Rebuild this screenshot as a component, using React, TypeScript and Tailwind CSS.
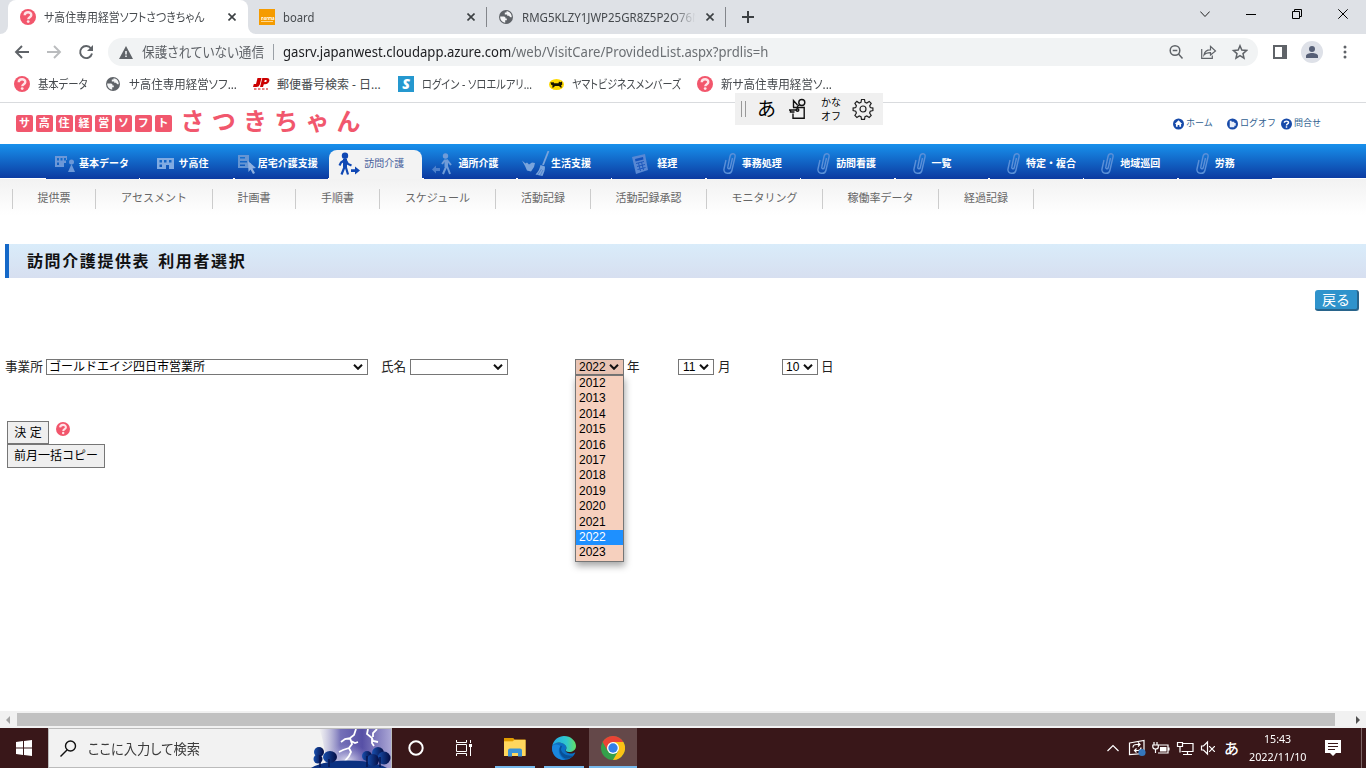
import React, { useLayoutEffect, useRef, useState } from "react";

const ui = "font-['Noto_Sans','Noto_Sans_CJK_JP',sans-serif]";
const page = "font-['Liberation_Sans','Noto_Sans_CJK_JP',sans-serif]";

/* Text condensed or expanded horizontally to a known width. */
function Fit({ w, className = "", children }: { w: number; className?: string; children: React.ReactNode }) {
  const ref = useRef<HTMLSpanElement>(null);
  const [scale, setScale] = useState(1);
  useLayoutEffect(() => {
    if (ref.current) setScale(w / ref.current.offsetWidth);
  }, [w]);
  return (
    <span className={`block shrink-0 whitespace-nowrap ${className}`} style={{ width: w }}>
      <span
        ref={ref}
        className="inline-block origin-left [font-feature-settings:'palt']"
        style={{ transform: `scaleX(${scale})` }}
      >
        {children}
      </span>
    </span>
  );
}

function Question({ size = 16 }: { size?: number }) {
  return (
    <svg width={size} height={size} viewBox="0 0 16 16" className="shrink-0">
      <circle cx="8" cy="8" r="8" fill="#f2566c" />
      <path d="M4.700 6.200c.2-4 6.700-3.800 6.600-.1 0 2.200-3 2-3 4.200" fill="none" stroke="#ffe3e7" strokeWidth="2.400" />
      <circle cx="8.200" cy="12.600" r="1.400" fill="#ffe3e7" />
    </svg>
  );
}

function Globe() {
  return (
    <svg width="14" height="14" viewBox="0 0 14 14" className="shrink-0">
      <circle cx="7" cy="7" r="7" fill="#5f6368" />
      <path d="M1.200 6.600h3.600c1.300 0 1.700.7 1.700 1.800h1.300v1.800H6.200v2.500C3 12.300 1 9.500 1.200 6.600zM7.500 1.300v1.200H5.800v1.900h2.400v1.400h1.600c.8 0 .8 1.400 1.800 1.400h1.100C13 4 10.500 1.400 7.500 1.300z" fill="#f4f5f6" />
    </svg>
  );
}

function Cross({ className = "" }: { className?: string }) {
  return (
    <svg width="8" height="8" viewBox="0 0 8 8" className={`shrink-0 ${className}`}>
      <path d="M.5.5l7 7M7.500.5l-7 7" stroke="#3c4043" strokeWidth="1.600" />
    </svg>
  );
}

function TabStrip() {
  return (
    <div className="flex h-[34px] bg-[#dee1e6] text-[12px] text-[#45494d]">
      <div className="flex w-2 items-end bg-white">
        <div className="h-full w-2 rounded-br-lg bg-[#dee1e6]" />
      </div>
      <div className="flex w-60 items-center rounded-t-lg bg-white pl-3">
        <Question />
        <Fit w={160} className="ml-2 pt-px">サ高住専用経営ソフトさつきちゃん</Fit>
        <Cross className="ml-6" />
      </div>
      <div className="w-2 bg-white">
        <div className="h-full w-2 rounded-bl-lg bg-[#dee1e6]" />
      </div>
      <div className="ml-[3px] flex w-[227px] items-center">
        <div className="flex size-4 flex-col items-center justify-center bg-[#f59b00] pt-1 text-[5px] leading-none font-bold text-white">
          <Fit w={13}>norma</Fit>
          <span className="h-px w-3 bg-[#ffd68c]" />
        </div>
        <Fit w={31} className="ml-2 pt-px">board</Fit>
        <Cross className="ml-[153px]" />
      </div>
      <div className="mt-[7px] h-5 w-px bg-[#83868b]" />
      <div className="flex w-[238px] items-center pl-3">
        <Globe />
        <div className="ml-[9px] w-[179px] pt-px [mask-image:linear-gradient(90deg,#000_84%,transparent_97%)]">
          <Fit w={179}>RMG5KLZY1JWP25GR8Z5P2O76N</Fit>
        </div>
        <Cross className="ml-[5px]" />
      </div>
      <div className="mt-[7px] h-5 w-px bg-[#83868b]" />
      <svg width="12" height="12" viewBox="0 0 12 12" className="mt-[11px] ml-4">
        <path d="M6 0v12M0 6h12" stroke="#3c4043" strokeWidth="2" />
      </svg>
      <div className="mt-2 mr-[18px] ml-auto flex gap-[36px]">
        <svg width="10" height="12" viewBox="0 0 10 12"><path d="M.3 3.500L5 8.500l4.700-5" fill="none" stroke="#222" /></svg>
        <svg width="10" height="12" viewBox="0 0 10 12"><path d="M0 6.500h10" stroke="#000" /></svg>
        <svg width="10" height="12" viewBox="0 0 10 12"><path d="M.5 3.500h7v7h-7zM2.500 3.500v-2h7v7h-2" fill="none" stroke="#000" /></svg>
        <svg width="16" height="12" viewBox="3 0 16 12" className="-mr-1.5"><path d="M3.300 1.300l9.400 9.400M12.700 1.300l-9.400 9.400" stroke="#000" /></svg>
      </div>
    </div>
  );
}

function Toolbar() {
  return (
    <div className="flex h-9 items-center bg-white">
      <svg width="80" height="16" viewBox="0 0 80 16" className="ml-[14px] shrink-0" fill="none" strokeWidth="1.900">
        <path d="M15 8H2M8 2L2 8l6 6" stroke="#5f6368" />
        <path d="M33 8h13M40 2l6 6-6 6" stroke="#babcbe" />
        <path d="M77 4.500A6 6 0 1 0 78 9.500" stroke="#5f6368" />
        <path d="M79 1v6h-6z" fill="#5f6368" />
      </svg>
      <div className="ml-[14px] flex h-7 w-[1150px] items-center rounded-full bg-[#f1f3f4] pl-[11px] text-[14px]">
        <svg width="14" height="13" viewBox="0 0 14 13"><path d="M7 0l7 13H0z" fill="#5f6368" /><path d="M7 5v3.500M7 9.500V11" stroke="#f1f3f4" strokeWidth="1.600" /></svg>
        <Fit w={122} className="ml-[9px] -mt-px text-[#5f6368]">保護されていない通信</Fit>
        <div className="mx-[9px] h-4 w-px bg-[#9aa0a6]" />
        <Fit w={485} className="-mt-px text-[#6b6f73]"><span className="text-[#202124]">gasrv.japanwest.cloudapp.azure.com</span>/web/VisitCare/ProvidedList.aspx?prdlis=h</Fit>
        <svg width="80" height="16" viewBox="0 0 80 16" className="mr-[10px] ml-auto" fill="none" stroke="#5f6368" strokeWidth="1.500">
          <circle cx="7" cy="6.500" r="4.800" /><path d="M10.500 10l4 4.500M4.700 6.500h4.600" />
          <path d="M33.700 5v9.300h10.600V11.500M36 11c.5-4 3-5.200 6.500-5.200V2.300L47.500 7l-5 4V8.600c-3 0-5 .4-6.500 2.400z" strokeWidth="1.200" />
          <path d="M72 1.800l1.800 4.300 4.700.4-3.500 3.100 1 4.500-4-2.400-4 2.400 1-4.500-3.500-3.100 4.700-.4z" />
        </svg>
      </div>
      <svg width="14" height="14" viewBox="0 0 14 14" className="ml-[15px]"><path d="M0 0h14v14H0zM2 2v10h7V2z" fill="#5f6368" fillRule="evenodd" /></svg>
      <svg width="22" height="22" viewBox="0 0 22 22" className="ml-[14px]"><circle cx="11" cy="11" r="11" fill="#dee1e8" /><circle cx="11" cy="8" r="3" fill="#565f76" /><path d="M5 17v-2c0-4 12-4 12 0v2z" fill="#565f76" /></svg>
      <svg width="4" height="14" viewBox="0 0 4 14" className="ml-5"><g fill="#5f6368"><circle cx="2" cy="2" r="1.500" /><circle cx="2" cy="7" r="1.500" /><circle cx="2" cy="12" r="1.500" /></g></svg>
    </div>
  );
}

function Bookmarks() {
  return (
    <div className="flex h-[33px] items-center border-b border-[#d9dbde] bg-white pb-1 pl-[14px] text-[12px] text-[#45494d]">
      <Question />
      <Fit w={50} className="ml-2 pt-px">基本データ</Fit>
      <div className="ml-[18px] flex"><Globe /></div>
      <Fit w={108} className="ml-[9px] pt-px">サ高住専用経営ソフ...</Fit>
      <svg width="17" height="12" viewBox="0 0 17 12" className="ml-4">
        <path d="M4.500 0h4L6.800 6.500Q6 9 3.500 9H0l.8-3h2.200zM9.300 0H14q3 0 2.300 3T12 6.200h-1.200L10 9H7zM11.800 2l-.5 2h1.200q1 0 1.200-1T13 2z" fill="#c00" fillRule="evenodd" />
        <path d="M1 11h14" stroke="#c00" strokeDasharray="2.500 1.500" />
      </svg>
      <Fit w={104} className="ml-[7px] pt-px">郵便番号検索 - 日...</Fit>
      <div className="ml-[17px] flex size-4 items-center justify-center bg-[#2598cf] text-[14px] leading-none font-black text-white italic">S</div>
      <Fit w={110} className="ml-2 pt-px">ログイン - ソロエルアリ...</Fit>
      <svg width="15" height="11" viewBox="0 0 15 11" className="ml-[17px]">
        <ellipse cx="7.500" cy="5.500" rx="7.500" ry="5.500" fill="#ffda00" />
        <path d="M1.500 3l1.500.5 1.500-.5.5 1.300h4.500L10 2.500l1.300.7 1.700-.7.3 3L12 6.500l1 2h-1.500L10 7H6L4.500 8.500H2.800l1-1.800L2 5.500z" fill="#151200" />
      </svg>
      <Fit w={109} className="ml-2 pt-px">ヤマトビジネスメンバーズ</Fit>
      <div className="ml-4"><Question /></div>
      <Fit w={111} className="ml-2 pt-px">新サ高住専用経営ソ...</Fit>
    </div>
  );
}

function ImeBar() {
  return (
    <div className="absolute top-[93px] left-[735px] z-10 flex h-8 w-[148px] items-center bg-[#f0f0f0] pl-[6px] text-black">
      <div className="h-4 w-[5px] border-x border-[#999]" />
      <span className="ml-[11px] w-5 text-[19px] leading-none">あ</span>
      <svg width="19" height="22" viewBox="0 0 19 22" className="ml-[11px]" fill="none" stroke="#111" strokeWidth="1.400">
        <path d="M5 9.500h11.200v10.700H5V15.500M1 12h8.500M2.500 12v2h4M5.500 9.500v-7l4 4.500M9 8.500l3-2" />
        <circle cx="9.500" cy="12" r="1.300" />
        <circle cx="13.800" cy="4.500" r="3" />
      </svg>
      <div className="ml-[14px] flex w-5 flex-col items-center text-[10px] leading-[14px]"><span>かな</span><span>オフ</span></div>
      <svg width="22" height="22" viewBox="0 0 22 22" className="ml-[11px]" fill="none" stroke="#222" strokeWidth="1.200">
        <path d="M9.500 1.500h3l.5 2.800 1.800.7 2.400-1.600 2 2-1.500 2.500.6 1.600 2.600.6v2.400l-2.600.7-.7 1.800 1.600 2.400-2 2-2.400-1.500-1.800.7-.5 2.700h-3l-.5-2.700-1.800-.7-2.300 1.500-2-2L4.400 15l-.7-1.800-2.600-.7v-2.400l2.600-.6.7-1.600L2.900 5.400l2-2L7.200 5l1.800-.7z" />
        <circle cx="11" cy="11" r="3" />
      </svg>
    </div>
  );
}

function HeadLink({ kind, label, className }: { kind: "home" | "out" | "help"; label: string; className: string }) {
  return (
    <a className={`flex items-center gap-0.5 text-[9px] leading-3 text-[#315f91] ${className}`}>
      <svg width="11" height="12" viewBox="0 0 12 12" className="-mb-px">
        <circle cx="6" cy="6" r="6" fill="#174aa9" />
        {kind === "home" && <path d="M6 2L2 6h1.200v3h1.900V7h1.800v2h1.900V6H10z" fill="#fff" />}
        {kind === "out" && <path d="M3 2.500h2v1h3V5h1.500v3H8v1.500H3z" fill="#e8eefb" />}
        {kind === "help" && <path d="M3.700 4.700c.1-2.500 4.700-2.400 4.500 0C8.100 6 6 6 6 7.500M6 8.500V10" stroke="#fff" strokeWidth="1.600" fill="none" />}
      </svg>
      {label}
    </a>
  );
}

function SiteHeader() {
  return (
    <div className="flex h-[41px] items-start bg-white pl-4">
      <div className="mt-[11.500px] flex gap-[2.800px]">
        {"サ高住経営ソフト".split("").map((c, i) => (
          <span key={i} className="flex size-[17px] items-center justify-center rounded-[2px] bg-[#f1576d] text-[11px] leading-none font-bold text-white">{c}</span>
        ))}
      </div>
      <span className="mt-[6px] ml-[9px] text-[24px] leading-[26px] font-bold tracking-[7.200px] text-[#f1576d]">さつきちゃん</span>
      <div className="mt-[14px] ml-auto flex w-[193px]">
        <HeadLink kind="home" label="ホーム" className="w-[54px]" />
        <HeadLink kind="out" label="ログオフ" className="w-[54px]" />
        <HeadLink kind="help" label="問合せ" className="" />
      </div>
    </div>
  );
}

type Kind = "data" | "building" | "home" | "visit" | "day" | "clean" | "calc" | "clip";

function NavIcon({ kind }: { kind: Kind }) {
  const building = <path d="M0 4h17v11h-5v-4H9v4H0zM2.500 6v2.500H5V6zM7 6v2.500h2.500V6zM12 6v2.500h2.500V6zM2.500 10.500V13H5v-2.500z" fillRule="evenodd" />;
  switch (kind) {
    case "data":
      return <svg width="20" height="24" viewBox="0 0 20 24" fill="#6c98d8"><path d="M0 4h12v4h-1v3H9v4H0zM2 6v2.500h2V6zM5.500 6v2.500h2V6zM9 6v2.500h2V6zM2 10.500V13h2v-2.500z" fillRule="evenodd" /><circle cx="16.500" cy="10" r="2.500" /><path d="M16.500 12l3.500 8h-7z" /></svg>;
    case "building":
      return <svg width="17" height="20" viewBox="0 0 17 20" fill="#80abe2">{building}</svg>;
    case "home":
      return <svg width="19" height="24" viewBox="0 0 19 24"><path d="M0 3h11v8h2v5H0zM2 5v1.500h5V5zM2 9v1.500h7V9zM2 12.500V14h5v-1.500z" fill="#6595d3" fillRule="evenodd" /><path d="M10 9l8 7-3.500.5L17 21l-2 1-2.500-4.500L10.500 20z" fill="#8fb0e0" /></svg>;
    case "visit":
      return <svg width="22" height="24" viewBox="0 0 22 24"><circle cx="7" cy="3.800" r="3.200" fill="#1048b4" /><path d="M6 8.500L3 10.500 1.500 13.500M6.500 8v7L3.500 22.500M8 8.500l2 3.500 3.500 1.500M7.500 14l2.500 8.500" fill="none" stroke="#1048b4" strokeWidth="2.200" /><path d="M5 7h4v8.500H5z" fill="#1048b4" /><path d="M13 17.200h4V14.500l5 4-5 4v-2.500h-4z" fill="#1048b4" /></svg>;
    case "day":
      return <svg width="20" height="24" viewBox="0 0 20 24" fill="none" stroke="#709cd8" strokeWidth="2"><circle cx="13.500" cy="4" r="2.700" fill="#709cd8" stroke="none" /><path d="M13 8l-3 4M15 8l4 5M14 8v7l-3 7M15 14l3 8" /><path d="M12.500 7.500h3.500v7.500h-3.500z" fill="#709cd8" stroke="none" /><path d="M8 17H4v-2.500L0 18.500l4 4V20h4z" transform="translate(0 -1)" fill="#4d80cc" stroke="none" /></svg>;
    case "clean":
      return <svg width="28" height="26" viewBox="0 0 28 26" fill="#7aa4dc"><path d="M0 9.500l3.500 3 1.500-1 2 2 3-2 3 .5-1 4-3 4.500-4-1L3 15z" /><path d="M26.500 0L21 14" stroke="#7aa4dc" strokeWidth="1.800" /><path d="M18.500 14l4.500 1.500c0 4-1 6-2.500 9.500l-7-1.500c3-3 4-5.500 5-9.500z" /><path d="M15.500 24l4-6M18 25l3-6" stroke="#3d74c8" strokeWidth=".7" /></svg>;
    case "calc":
      return <svg width="18" height="22" viewBox="0 0 18 22"><path d="M1 4l13-3 3 16-12 4z" fill="#5888d4" /><path d="M4 6l8-2 .5 2.500-8 2z" fill="#1252bd" /><path d="M5 10.500l8-2M6 13.500l8-2M6.500 16.500l8-2M7.500 10l2 8M10.500 9l2 8" stroke="#1c58bc" /></svg>;
    default:
      return <svg width="13" height="23" viewBox="0 0 13 23" fill="none" stroke="#5b90d8" strokeWidth="1.400"><path d="M9.500 6L7.300 15.500C6.800 17.500 4.300 17 4.800 15L7 4.500C8 .5 13 1 12 5L9 18c-1 5-9 4-8-1L3 8" /></svg>;
  }
}

const tabs: { label: string; kind: Kind; box: string; active?: boolean }[] = [
  { label: "基本データ", kind: "data", box: "pl-[9px] gap-1" },
  { label: "サ高住", kind: "building", box: "pl-[17px] gap-1" },
  { label: "居宅介護支援", kind: "home", box: "pl-[3px] gap-px" },
  { label: "訪問介護", kind: "visit", box: "pl-[9px] gap-1", active: true },
  { label: "通所介護", kind: "day", box: "pl-2 gap-[7px]" },
  { label: "生活支援", kind: "clean", box: "pl-1 gap-px" },
  { label: "経理", kind: "calc", box: "pl-[19px] gap-2" },
  { label: "事務処理", kind: "clip", box: "pl-4 gap-1.5" },
  { label: "訪問看護", kind: "clip", box: "pl-4 gap-1.5" },
  { label: "一覧", kind: "clip", box: "pl-[17px] gap-1.5" },
  { label: "特定・複合", kind: "clip", box: "pl-[17px] gap-1.5" },
  { label: "地域巡回", kind: "clip", box: "pl-[17px] gap-1.5" },
  { label: "労務", kind: "clip", box: "pl-[17px] gap-1.5" },
];

const sub = [
  ["提供票", "w-[83px]"], ["アセスメント", "w-[117px]"], ["計画書", "w-[83px]"], ["手順書", "w-[84px]"],
  ["スケジュール", "w-[116px]"], ["活動記録", "w-[95px]"], ["活動記録承認", "w-[116px]"],
  ["モニタリング", "w-[116px]"], ["稼働率データ", "w-[116px]"], ["経過記録", "w-[95px]"],
];

function Nav() {
  return (
    <>
      <nav className="flex h-[35px] bg-[linear-gradient(#1891ec,#0c3ca2_34px,#fff_34px)] pl-[46px]">
        {tabs.map((t) => (
          <div key={t.label} className={`w-[94.400px] shrink-0 ${t.active ? "pt-1.5" : "pr-[1.500px]"}`}>
            <div
              className={`flex items-center text-[10px] leading-none whitespace-nowrap ${t.box} ${
                t.active
                  ? "h-[29px] w-[93px] rounded-t-lg bg-[#f3f3f3] pb-0.5 text-[#48619b]"
                  : "h-[35px] bg-[linear-gradient(#1891ec,#0c3ca2_34px)] pt-1 font-bold text-white"
              }`}
            >
              <NavIcon kind={t.kind} />
              {t.label}
            </div>
          </div>
        ))}
      </nav>
      <div className="flex h-9 bg-linear-to-b from-[#f2f2f2] to-white pt-2.5 pl-3 text-[11px] leading-[19px] text-[#666]">
        {sub.map(([label, w]) => (
          <div key={label} className={`h-5 border-l border-[#ccc] text-center ${w}`}>{label}</div>
        ))}
        <div className="h-5 w-px bg-[#ccc]" />
      </div>
    </>
  );
}

function Select({ value, className = "" }: { value: string; className?: string }) {
  return (
    <div className={`flex h-4 items-center justify-between border border-[#767676] pr-1 text-[12px] leading-none whitespace-nowrap text-black ${className}`}>
      <span>{value}</span>
      <svg width="10" height="6" viewBox="0 0 10 6" className="shrink-0"><path d="M1 .8l4 4 4-4" fill="none" stroke="#111" strokeWidth="2" /></svg>
    </div>
  );
}

const years = [2012, 2013, 2014, 2015, 2016, 2017, 2018, 2019, 2020, 2021, 2022, 2023];

function Content() {
  return (
    <main className="flex h-[496px] flex-col pt-[29px] text-[#222]">
      <h1 className="ml-[5px] h-[34px] border-l-4 border-[#1468c8] bg-linear-to-b from-[#d9ecfa] to-[#d7dff0] pl-[18px] text-[16px] leading-[36px] font-bold tracking-[1.600px] [word-spacing:2px] text-[#111]">訪問介護提供表 利用者選択</h1>
      <button className="mt-3 mr-[7px] h-[21px] w-[44px] self-end rounded-[3px] border-r-2 border-b-2 border-[#28648b] bg-[#2f93cc] text-[14px] leading-[18px] text-white">戻る</button>
      <div className="mt-[48px] flex h-4 items-center pl-[5px] text-[12.600px] leading-none whitespace-nowrap">
        <span className="w-[41px]">事業所</span>
        <Select value="ゴールドエイジ四日市営業所" className="w-[322px] pl-0.5" />
        <span className="ml-[13px] w-[29px]">氏名</span>
        <Select value="" className="w-[98px]" />
        <div className="relative ml-[67px]">
          <Select value="2022" className="w-[49px] bg-[#e9c4b4] pl-[3px]" />
          <ul className="absolute top-4 left-0 h-[187px] w-[49px] border border-[#767676] bg-[#f6d0be] text-[12px] leading-[15.400px] text-black shadow-[1px_4px_7px_rgba(0,0,0,0.35)]">
            {years.map((y) => (
              <li key={y} className={`pl-[3px] ${y === 2022 ? "bg-[#1e90ff] text-white" : ""}`}>{y}</li>
            ))}
          </ul>
        </div>
        <span className="ml-[3px] w-[51px]">年</span>
        <Select value="11" className="w-9 pl-1" />
        <span className="ml-1 w-[64px]">月</span>
        <Select value="10" className="w-9 pl-[3px]" />
        <span className="ml-[3px]">日</span>
      </div>
      <div className="mt-[46px] flex pl-[7px]">
        <button className="h-[23px] w-[42px] border border-[#767676] bg-[#efefef] text-[12px] leading-none text-black">決 定</button>
        <div className="mt-px ml-[7px]"><Question size={14} /></div>
      </div>
      <button className="ml-[7px] h-6 w-[98px] border border-[#767676] bg-[#efefef] text-[12px] leading-none whitespace-nowrap text-black">前月一括コピー</button>
    </main>
  );
}

function ScrollBar() {
  return (
    <div className="flex h-[17px] items-center justify-between bg-[#f1f1f1] px-1.5">
      <svg width="4" height="8" viewBox="0 0 4 8"><path d="M4 0v8L0 4z" fill="#a3a3a3" /></svg>
      <div className="mr-auto ml-[7px] h-[13px] w-[1318px] bg-[#c1c1c1]" />
      <svg width="4" height="8" viewBox="0 0 4 8"><path d="M0 0v8l4-4z" fill="#505050" /></svg>
    </div>
  );
}

function Storm() {
  return (
    <svg width="80" height="39" viewBox="0 0 80 39" className="ml-auto shrink-0">
      <defs>
        <linearGradient id="sky" x1="0" x2="1"><stop offset="0" stopColor="#a9a6d3" stopOpacity="0" /><stop offset=".3" stopColor="#7571b8" /><stop offset=".6" stopColor="#5750a6" /><stop offset="1" stopColor="#aaa6d5" /></linearGradient>
        <radialGradient id="glow"><stop offset="0" stopColor="#fff" /><stop offset="1" stopColor="#aaa5dc" stopOpacity="0" /></radialGradient>
        <linearGradient id="tree" x1="0" x2="1"><stop offset="0" stopColor="#174fae" /><stop offset="1" stopColor="#050d43" /></linearGradient>
      </defs>
      <path d="M8 0h72v39H20C12 27 14 12 8 0z" fill="url(#sky)" />
      <ellipse cx="36" cy="32" rx="25" ry="17" fill="url(#glow)" opacity=".8" />
      <path d="M45 0l-2 6-4 3 2 6-3 4 2 4-2 4-4 5M40 9l-6 1-4 3M38 19l-6 2-4 2M40 12l4 2 3-1M57 0l-1 5 5 4 1 3 5 1M61 9v5l2 3M66 0l-4 4v4" fill="none" stroke="#fff" strokeWidth="1.800" />
      <path d="M0 39c16-10 58-10 76 0z" fill="#0b3181" />
      <g fill="url(#tree)"><circle cx="8" cy="23" r="5" /><circle cx="7" cy="30" r="4.500" /><ellipse cx="19" cy="28" rx="7" ry="6" /><circle cx="56" cy="27" r="5" /><circle cx="67" cy="24" r="6" /><circle cx="73" cy="29" r="6.500" /><circle cx="62" cy="31" r="6" /></g>
      <path d="M9 26v12M18 30v8M56 27v11M69 28v10" stroke="#06144f" strokeWidth="1.500" />
    </svg>
  );
}

function Taskbar() {
  return (
    <footer className="flex h-10 items-stretch bg-[#391719] text-white">
      <div className="flex w-12 items-center justify-center">
        <svg width="16" height="16" viewBox="0 0 16 16" fill="#fff"><path d="M0 2l7-1v6.500H0zM8 .9L16 0v7.500H8zM0 8.500h7V15l-7-1zM8 8.500h8V16l-8-1z" /></svg>
      </div>
      <div className="flex w-[344px] items-center border border-[#bbb] bg-[#f2f2f2] pl-[11px] text-[#3c3c3c]">
        <svg width="17" height="17" viewBox="0 0 17 17" className="shrink-0" fill="none" stroke="#111" strokeWidth="1.400"><circle cx="10.500" cy="6" r="5" /><path d="M7 10L.5 16.500" /></svg>
        <Fit w={112} className="ml-[11px] text-[14px]">ここに入力して検索</Fit>
        <Storm />
      </div>
      <div className="flex w-12 items-center justify-center"><svg width="16" height="16" viewBox="0 0 16 16"><circle cx="8" cy="8" r="6.700" fill="none" stroke="#fff" strokeWidth="2" /></svg></div>
      <div className="flex w-[47px] items-center justify-center"><svg width="16" height="16" viewBox="0 0 16 16" fill="none" stroke="#fff"><path d="M.5 0v2.500h10V0M.5 16v-2.500h10V16M.5 4.500h10v7H.500zM14.500 0v3M14.500 7v9" /><path d="M13 4h3v3h-3z" fill="#fff" stroke="none" /></svg></div>
      <div className="ml-2 flex w-10 items-center justify-center border-b-2 border-[#76b9ed] pt-px">
        <svg width="22" height="19" viewBox="0 0 22 19"><path d="M0 0h9l1.500 1.500H21.500v16H0z" fill="#f2b31a" /><path d="M0 0h9l1 2-1.500 1H0z" fill="#e09b00" /><path d="M0 3.500h8.500l2-1.500h11v16H0z" fill="#ffd75e" /><path d="M4 18.500v-6q0-2 2-2h10q2 0 2 2v6h-4v-3.500H8v3.500z" fill="#3b93d6" /></svg>
      </div>
      <div className="ml-[9px] flex w-10 items-center justify-center border-b-2 border-[#76b9ed] pt-px">
        <svg width="24" height="24" viewBox="0 0 24 24">
          <defs>
            <linearGradient id="edge"><stop stopColor="#22a7e8" /><stop offset=".6" stopColor="#30c8cd" /><stop offset="1" stopColor="#63df64" /></linearGradient>
          </defs>
          <path d="M0 12C0 7 4 6 8 6.500c4 .3 6.500 3 6.500 5.500 0 1-1 1.500-1 2.500 0 2 3 3 5.500 3 1.500 0 3-.5 4-1 .3 0 .4.300.2.600C21 21.500 17 24 12 24 5 24 0 18.500 0 12z" fill="#0b70c5" />
          <path d="M8.500 10C5 14 7 21 13 24 5 24 0 18.500 0 12c0-3 3-5 8.500-2z" fill="#1a86dd" />
          <path d="M.2 10C1.500 3.500 7 0 12 0c7 0 12 5 12 10 0 4-3.500 6-7 6-2.500 0-4-1-3-2.200C16 10.500 12 6.500 7 6.500c-3 0-5.500 1.500-6.800 3.500z" fill="url(#edge)" />
          <path d="M9 9.500C6 12.500 7.500 20 13 22.500c3 .5 6.500-.7 8.500-3-6 1-12-2-12.500-6 0-1 .3-2 1-3z" fill="#095096" />
        </svg>
      </div>
      <div className="ml-[5px] flex w-12 items-center justify-center border-b-2 border-[#76b9ed] bg-[#644849] pt-px">
        <svg width="24" height="24" viewBox="0 0 24 24"><circle cx="12" cy="12" r="12" fill="#34a04b" /><path d="M12 6h10.400A12 12 0 0 0 1.600 6l5.200 9z" fill="#ea4335" /><path d="M12 6h10.400A12 12 0 0 1 12 24l5.200-9z" fill="#fbc116" /><circle cx="12" cy="12" r="6" fill="#fff" /><circle cx="12" cy="12" r="4.700" fill="#337fe8" /></svg>
      </div>
      <div className="ml-auto flex items-center">
        <svg width="104" height="18" viewBox="0 0 104 18" fill="none" stroke="#fff" strokeWidth="1.200" className="mr-[6px]">
          <path d="M.5 12l5.500-5.500 5.500 5.500" />
          <path d="M22.500 4l14.500-2.500v13L22.500 15.500zM26 8.500q0-3 3.500-3h3M31 3.500l2 2-2 2M34 8.500q0 3-3 3h-3M29.500 9.500l-2 2 2 2" />
          <circle cx="35" cy="13.500" r="3.600" fill="#3577bd" stroke="none" />
          <path d="M51.500 6h9.500v8h-10M62 8.500v3" /><path d="M53 8h6.500v4.500h-6.500z" fill="#fff" stroke="none" />
          <path d="M47 3v3M50 3v3M45.800 6h5.500v2q0 2-2.700 2t-2.800-2zM48.500 10v4" />
          <path d="M75 4.500h11v8H74.500M80.500 13v3M76 15.500h9M70.500 3.500h5v4h-5zM73 8v5.500" />
          <path d="M94.500 7h2l4-4v12l-4-4h-2z" />
        </svg>
        <svg width="6" height="6" viewBox="0 0 6 6" className="-ml-2 mr-[9px] mt-px"><path d="M0 0l6 6M6 0L0 6" stroke="#fff" strokeWidth="1.200" /></svg>
        <span className="w-[15px] text-[15px] leading-none font-medium">あ</span>
        <div className="ml-[9px] mr-px flex w-[59px] flex-col items-center text-[11px] leading-[18px]"><Fit w={27}>15:43</Fit><Fit w={58}>2022/11/10</Fit></div>
        <svg width="16" height="16" viewBox="0 0 16 16" className="ml-[17px]"><path d="M0 0h16v13h-5l-3 3-3-3H0z" fill="#fff" /><path d="M3 3.500h10M3 6.500h10M3 9.500h7" stroke="#391719" /></svg>
      </div>
      <div className="mr-1 ml-5 w-px bg-[#7b6465]" />
    </footer>
  );
}

export default function App() {
  return (
    <div className={`relative h-[768px] w-[1366px] overflow-hidden bg-white ${page}`}>
      <div className={ui}>
        <TabStrip />
        <Toolbar />
        <Bookmarks />
        <ImeBar />
      </div>
      <SiteHeader />
      <Nav />
      <Content />
      <ScrollBar />
      <div className={ui}><Taskbar /></div>
    </div>
  );
}
